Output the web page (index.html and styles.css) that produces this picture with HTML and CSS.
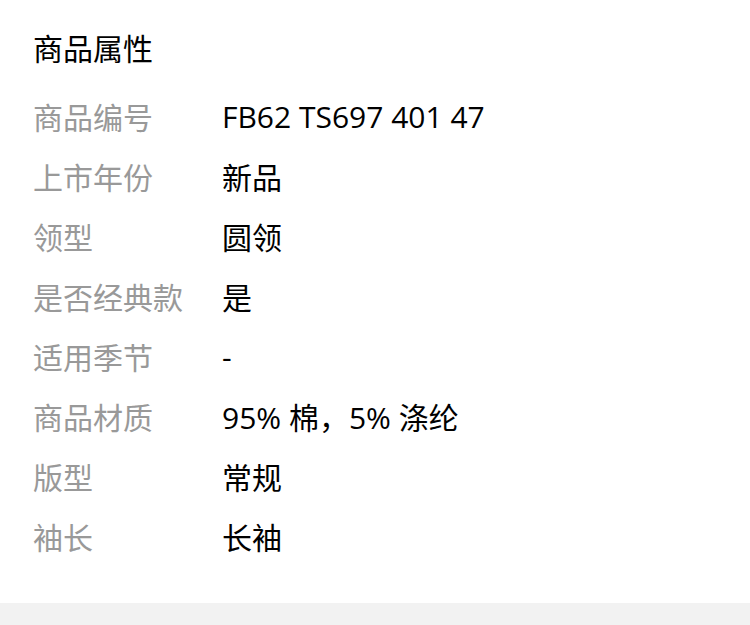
FILE: index.html
```html
<!DOCTYPE html>
<html lang="zh-CN">
<head>
<meta charset="utf-8">
<link rel="stylesheet" href="styles.css">
</head>
<body>
<section class="attrs">
  <h2 class="title">商品属性</h2>
  <dl class="list">
    <div class="row"><dt>商品编号</dt><dd>FB62 TS697 401 47</dd></div>
    <div class="row"><dt>上市年份</dt><dd>新品</dd></div>
    <div class="row"><dt>领型</dt><dd>圆领</dd></div>
    <div class="row"><dt>是否经典款</dt><dd>是</dd></div>
    <div class="row"><dt>适用季节</dt><dd>-</dd></div>
    <div class="row"><dt>商品材质</dt><dd>95% 棉，5% 涤纶</dd></div>
    <div class="row"><dt>版型</dt><dd>常规</dd></div>
    <div class="row"><dt>袖长</dt><dd>长袖</dd></div>
  </dl>
</section>
<div class="band"></div>
</body>
</html>
```
FILE: styles.css
```css
html, body {
  margin: 0;
  padding: 0;
  background: #fff;
}
body {
  font-family: "Open Sans", "Noto Sans CJK SC", sans-serif;
  font-size: 30px;
  color: #000;
}
.attrs {
  padding: 19px 33px 37px;
}
.title {
  margin: 0;
  font-size: 30px;
  font-weight: normal;
  line-height: 60px;
  color: #000;
}
.list {
  margin: 7px 0 0;
}
.row {
  display: flex;
  height: 60px;
  align-items: center;
}
.row dt {
  width: 189px;
  flex: none;
  color: #999;
}
.row dd {
  margin: 0;
  color: #000;
}
.band {
  height: 40px;
  background: #f2f2f2;
}
```
